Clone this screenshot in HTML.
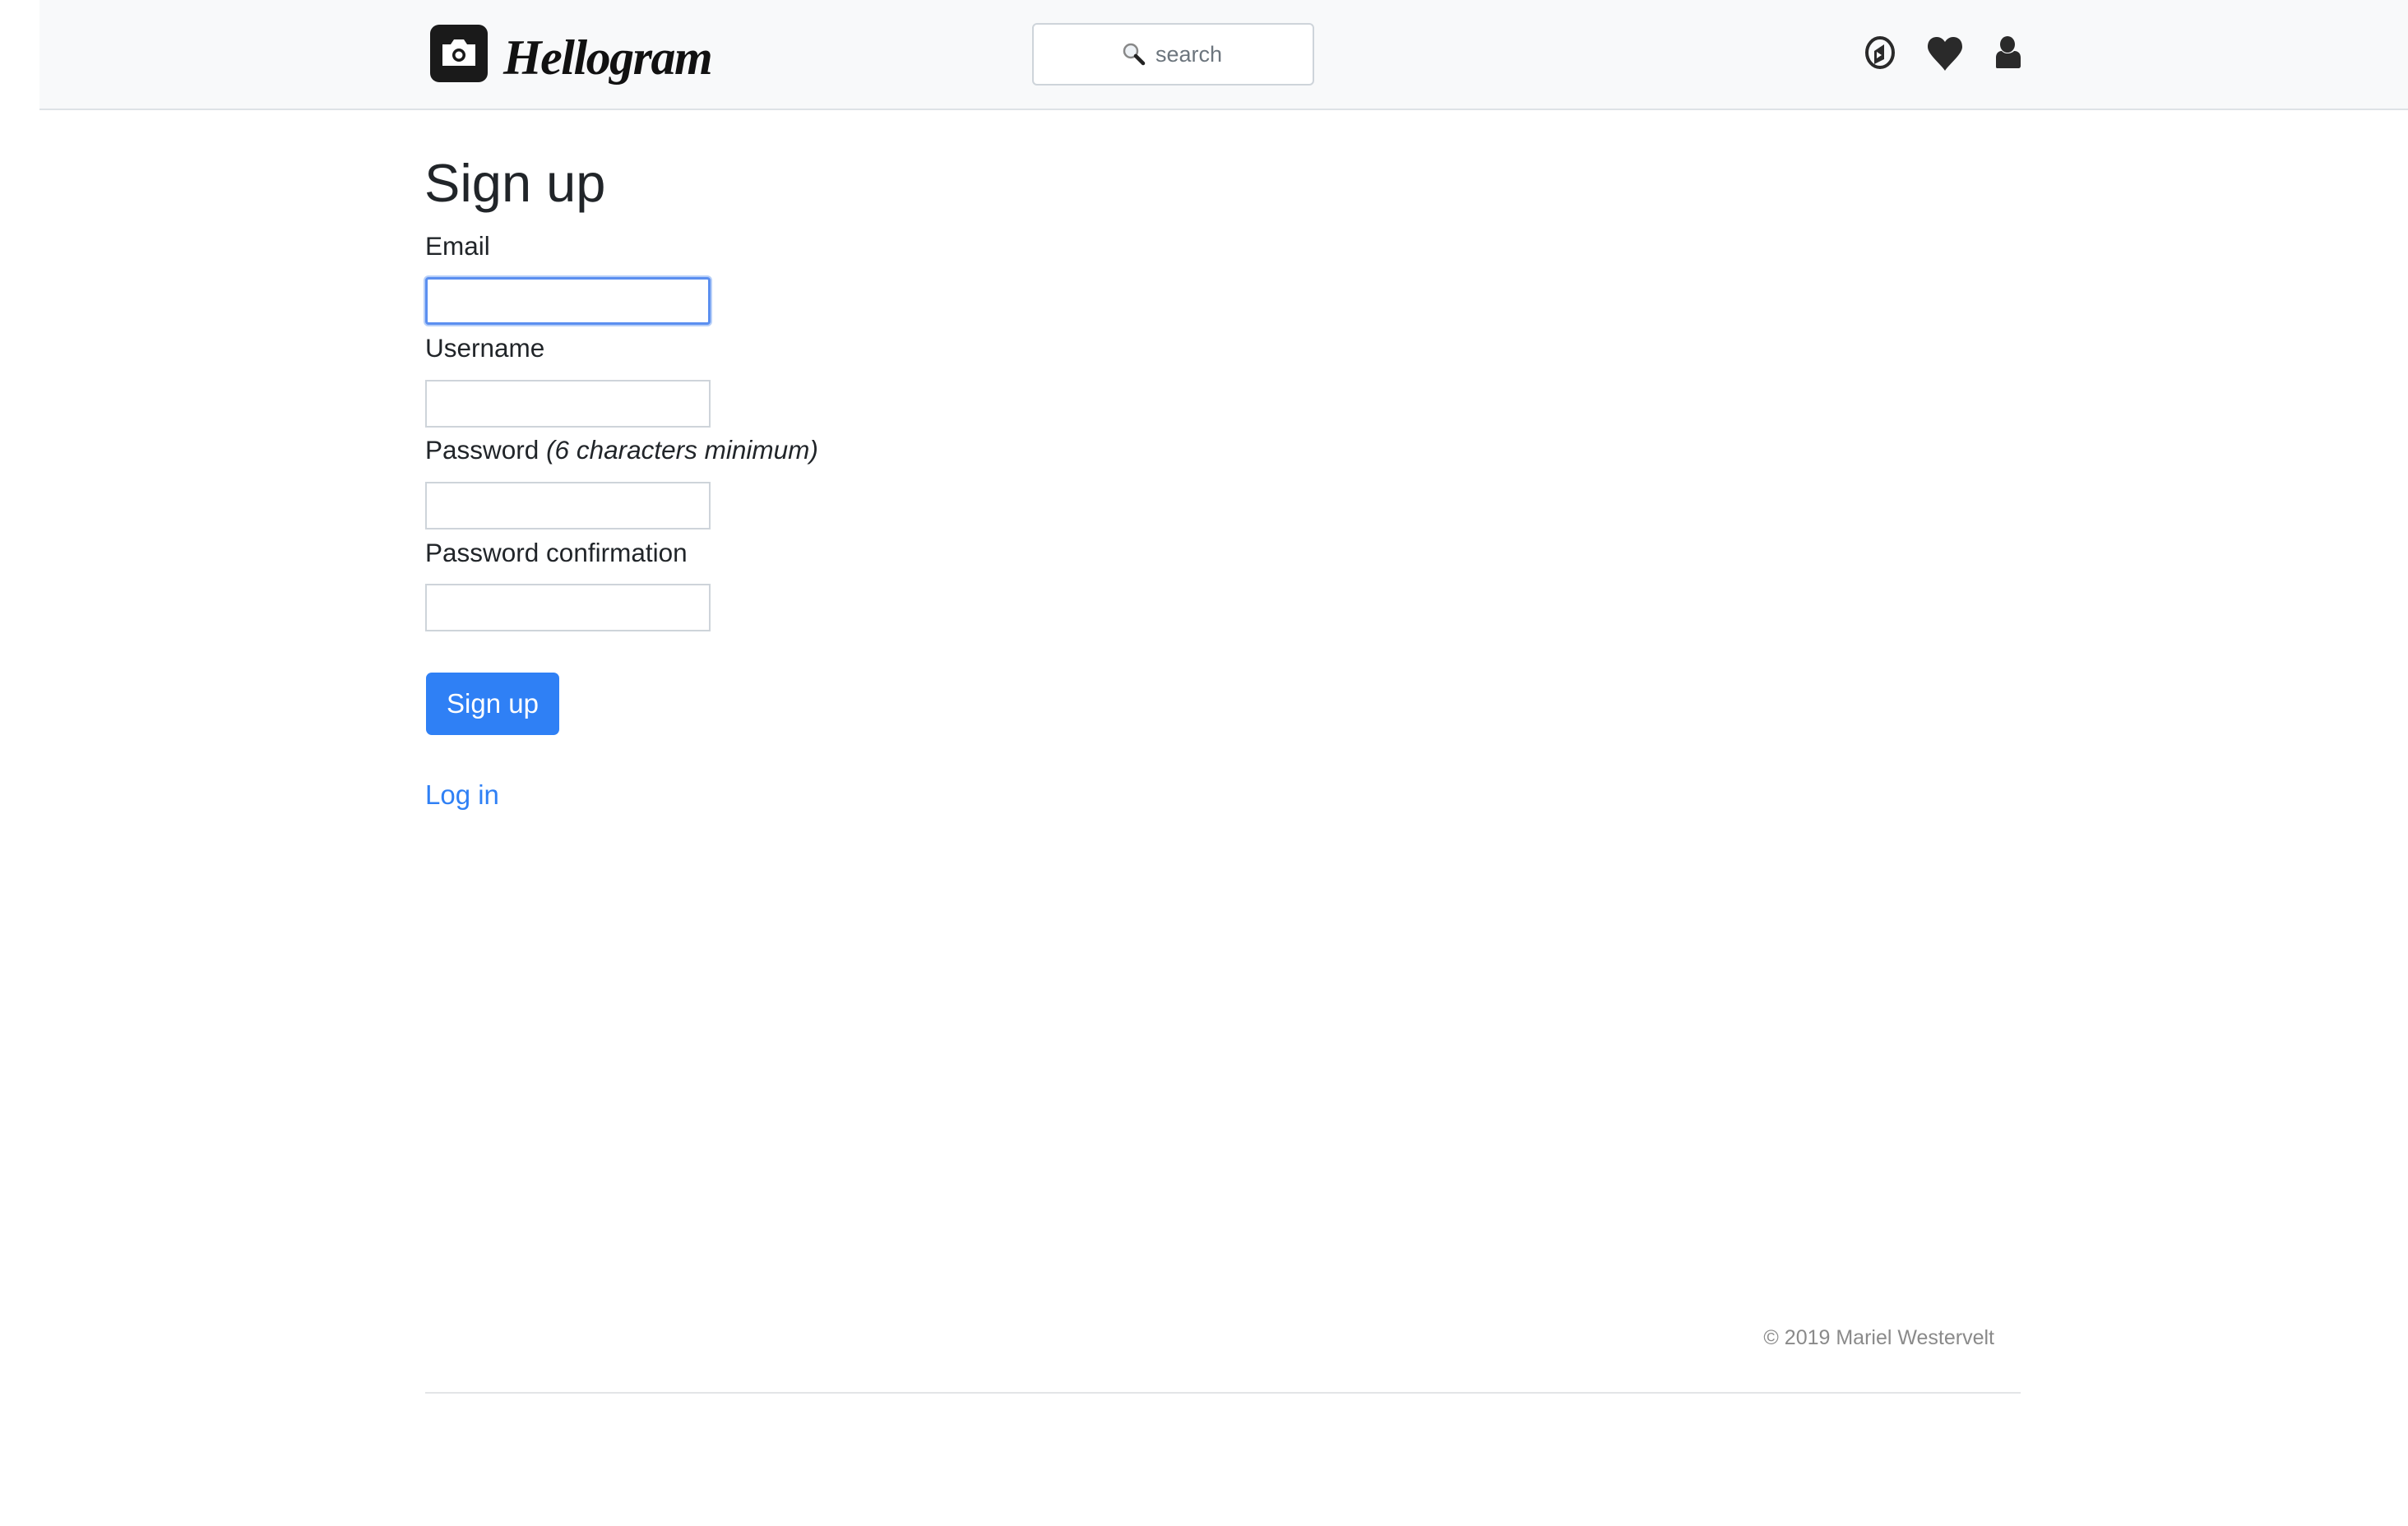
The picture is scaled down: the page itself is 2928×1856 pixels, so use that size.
<!DOCTYPE html>
<html><head><meta charset="utf-8"><style>
*{margin:0;padding:0;box-sizing:border-box}
body{width:2928px;height:1856px;background:#fff;font-family:"Liberation Sans",Arial,sans-serif;color:#212529;position:relative;overflow:hidden}
.hdr{position:absolute;left:48px;top:0;width:2880px;height:134px;background:#f8f9fa;border-bottom:2px solid #dee2e6}
.abs{position:absolute}
.lbl{position:absolute;left:517px;font-size:31.5px;line-height:36px}
.inp{position:absolute;left:517px;width:347px;height:58px;border:2px solid #ced4da;background:#fff}
</style></head><body>
<div class="hdr"></div>
<div class="abs" style="left:523px;top:30px;width:70px;height:70px;background:#1a1a1a;border-radius:11px"></div>
<svg class="abs" style="left:523px;top:30px" width="70" height="70" viewBox="0 0 70 70">
<path d="M15 24h10l4-6h12l4 6h10v26H15z" fill="#fff"/>
<circle cx="35" cy="37" r="8" fill="#1a1a1a"/><circle cx="35" cy="37" r="4.5" fill="#fff"/>
</svg>
<div class="abs" style="left:612px;top:30px;font-family:'Liberation Serif',serif;font-style:italic;font-weight:bold;font-size:60px;line-height:80px;color:#111;letter-spacing:-1.5px">Hellogram</div>
<div class="abs" style="left:1255px;top:28px;width:343px;height:76px;border:2px solid #ced4da;border-radius:6px;background:#fff"></div>
<svg class="abs" style="left:1364px;top:51px" width="30" height="30" viewBox="0 0 30 30">
<circle cx="11" cy="11" r="8" fill="#eef2f6" stroke="#888" stroke-width="2.5"/>
<path d="M17 17l9 9" stroke="#222" stroke-width="4.5" stroke-linecap="round"/>
</svg>
<div class="abs" style="left:1405px;top:49px;font-size:27px;line-height:34px;color:#6c757d">search</div>
<svg class="abs" style="left:2266px;top:44px" width="40" height="40" viewBox="0 0 40 40">
<ellipse cx="20" cy="20" rx="16" ry="18" fill="none" stroke="#2a2a2a" stroke-width="4"/>
<path d="M13 18l12-8v18l-12 6z" fill="#2a2a2a"/><path d="M16 19v8l6-4z" fill="#fff"/>
</svg>
<svg class="abs" style="left:2341px;top:44px" width="48" height="42" viewBox="0 0 48 42">
<path d="M24 42C18 33 3 22 3 13 3 5 8 1 14 1c5 0 8 3 10 6 2-3 5-6 10-6 6 0 11 4 11 12 0 9-15 20-21 29z" fill="#2a2a2a"/>
</svg>
<svg class="abs" style="left:2425px;top:44px" width="34" height="40" viewBox="0 0 34 40">
<ellipse cx="16" cy="10" rx="9" ry="10" fill="#2a2a2a"/>
<path d="M2 26c0-5 3-8 7-8 2 2 4 3 7 3s6-1 8-3c5 0 8 3 8 8v10c0 2-1 3-3 3H4c-2 0-2-1-2-3z" fill="#2a2a2a"/>
</svg>
<div class="abs" style="left:516px;top:183px;font-size:65px;line-height:80px;font-weight:500">Sign up</div>
<div class="lbl" style="top:281px">Email</div>
<div class="inp" style="top:337px;border:3px solid #5b8ff0;border-radius:4px;box-shadow:0 0 0 2px #b7cff8"></div>
<div class="lbl" style="top:405px">Username</div>
<div class="inp" style="top:462px"></div>
<div class="lbl" style="top:529px">Password <i>(6 characters minimum)</i></div>
<div class="inp" style="top:586px"></div>
<div class="lbl" style="top:654px">Password confirmation</div>
<div class="inp" style="top:710px"></div>
<div class="abs" style="left:518px;top:818px;width:162px;height:76px;background:#2f80f5;border-radius:7px;color:#fff;font-size:33px;line-height:76px;text-align:center">Sign up</div>
<div class="abs" style="left:517px;top:947px;font-size:33px;line-height:40px;color:#2f80f5">Log in</div>
<div class="abs" style="left:2000px;top:1612px;font-size:25px;line-height:30px;color:#8a8a8a;width:425px;text-align:right">© 2019 Mariel Westervelt</div>
<div class="abs" style="left:517px;top:1693px;width:1940px;height:2px;background:#e3e5e7"></div>
</body></html>
